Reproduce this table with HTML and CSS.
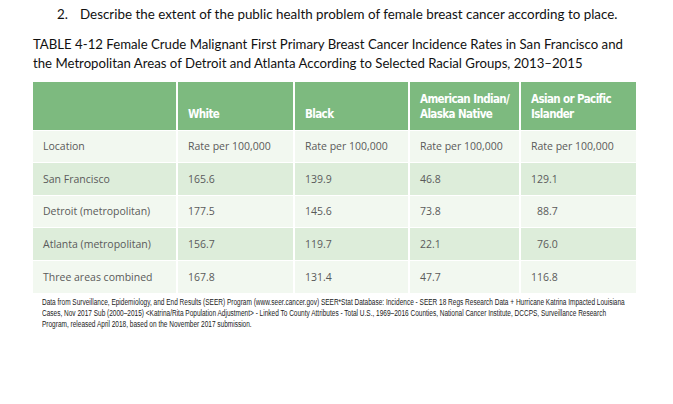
FILE: index.html
```html
<!DOCTYPE html>
<html>
<head>
<meta charset="utf-8">
<link rel="stylesheet" href="styles.css">
</head>
<body>
<div class="page">
  <p class="question"><span class="num">2.</span><span>Describe the extent of the public health problem of female breast cancer according to place.</span></p>
  <p class="caption">TABLE 4-12 Female Crude Malignant First Primary Breast Cancer Incidence Rates in San Francisco and the Metropolitan Areas of Detroit and Atlanta According to Selected Racial Groups, 2013–2015</p>
  <table class="rates">
    <colgroup>
      <col class="c1"><col class="c2"><col class="c3"><col class="c4"><col class="c5">
    </colgroup>
    <thead>
      <tr>
        <th></th>
        <th>White</th>
        <th>Black</th>
        <th>American Indian/<br>Alaska Native</th>
        <th>Asian or Pacific<br>Islander</th>
      </tr>
    </thead>
    <tbody>
      <tr class="light"><td>Location</td><td>Rate per 100,000</td><td>Rate per 100,000</td><td>Rate per 100,000</td><td>Rate per 100,000</td></tr>
      <tr class="dark"><td>San Francisco</td><td>165.6</td><td>139.9</td><td>46.8</td><td>129.1</td></tr>
      <tr class="light"><td>Detroit (metropolitan)</td><td>177.5</td><td>145.6</td><td>73.8</td><td class="pad">88.7</td></tr>
      <tr class="dark"><td>Atlanta (metropolitan)</td><td>156.7</td><td>119.7</td><td>22.1</td><td class="pad">76.0</td></tr>
      <tr class="light"><td>Three areas combined</td><td>167.8</td><td>131.4</td><td>47.7</td><td>116.8</td></tr>
    </tbody>
  </table>
  <div class="source-wrap">
    <p class="source">Data from Surveillance, Epidemiology, and End Results (SEER) Program (www.seer.cancer.gov) SEER*Stat Database: Incidence - SEER 18 Regs Research Data + Hurricane Katrina Impacted Louisiana<br>Cases, Nov 2017 Sub (2000–2015) &lt;Katrina/Rita Population Adjustment&gt; - Linked To County Attributes - Total U.S., 1969–2016 Counties, National Cancer Institute, DCCPS, Surveillance Research<br>Program, released April 2018, based on the November 2017 submission.</p>
  </div>
</div>
</body>
</html>
```

FILE: styles.css
```css
html, body {
  margin: 0;
  padding: 0;
  background: #ffffff;
  overflow: hidden;
}
.page {
  padding: 5px 0 0 33px;
  width: 603px;
  font-family: "Lato", "Open Sans", sans-serif;
  color: #111;
}
.question {
  margin: 0 0 0 24px;
  font-size: 13.4px;
  line-height: 19px;
  display: flex;
}
.question .num {
  width: 23px;
  flex: none;
}
.caption {
  margin: 11px 0 0 0;
  font-size: 13.2px;
  line-height: 19px;
}
.rates {
  margin-top: 9px;
  width: 603px;
  border-collapse: collapse;
  table-layout: fixed;
  font-family: "Open Sans", sans-serif;
}
.c1 { width: 144px; }
.c2 { width: 117px; }
.c3 { width: 115px; }
.c4 { width: 111px; }
.c5 { width: 116px; }
.rates th {
  background: #7dba7f;
  color: #ffffff;
  height: 48px;
  box-sizing: border-box;
  text-align: left;
  vertical-align: bottom;
  padding: 0 4px 8px 10px;
  font-family: "DejaVu Sans Condensed", "DejaVu Sans", sans-serif;
  font-stretch: condensed;
  font-weight: bold;
  font-size: 11.5px;
  letter-spacing: -0.6px;
  line-height: 15px;
  border-left: 2px solid #ffffff;
  white-space: nowrap;
}
.rates th:first-child,
.rates td:first-child {
  border-left: none;
}
.rates td {
  height: 32.5px;
  box-sizing: border-box;
  padding: 0 10px;
  font-size: 10.5px;
  color: #5a5a5a;
  border-left: 2px solid #ffffff;
  border-top: 1px solid #ffffff;
  white-space: nowrap;
}
.rates tr.light td { background: #f2f8f0; }
.rates tr.dark td { background: #ddedda; }
.rates td.pad { padding-left: 16px; }
.source-wrap {
  margin: 4px 0 0 9px;
  height: 40px;
}
.source {
  margin: 0;
  width: 800px;
  white-space: nowrap;
  transform: scaleX(0.765);
  transform-origin: 0 0;
  font-family: "Liberation Sans", sans-serif;
  font-size: 8.5px;
  line-height: 11px;
  color: #1a1a1a;
}
```
